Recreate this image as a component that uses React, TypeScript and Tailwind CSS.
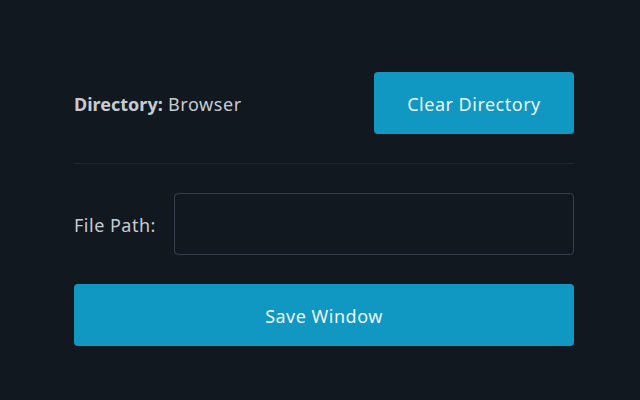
import React from "react";

function App() {
  return (
    <div className="min-h-[400px] w-full bg-[#121820] font-['Noto_Sans',sans-serif] text-[#c6cbd2]">
      <div className="ml-[74px] w-[500px] pt-[72px]">
        <div className="flex items-center justify-between">
          <p className="pt-[2px] text-lg tracking-[0.6px]">
            <span className="font-bold tracking-normal">Directory:</span> Browser
          </p>
          <button className="h-[62px] w-[200px] rounded bg-[#1097c2] pt-[2px] text-lg tracking-[0.5px] text-[#eef6fa]">
            Clear Directory
          </button>
        </div>
        <div className="my-[29px] border-t border-[#1f2733]" />
        <div className="flex items-center">
          <label className="w-[100px] pt-[2px] text-lg tracking-[0.5px]">File Path:</label>
          <input
            type="text"
            className="h-[62px] flex-1 rounded border border-[#353f4c] bg-transparent px-3 text-lg text-white outline-none"
          />
        </div>
        <button className="mt-[29px] h-[62px] w-full rounded bg-[#1097c2] pt-[2px] text-lg tracking-[0.5px] text-[#eef6fa]">
          Save Window
        </button>
      </div>
    </div>
  );
}

export default App;
